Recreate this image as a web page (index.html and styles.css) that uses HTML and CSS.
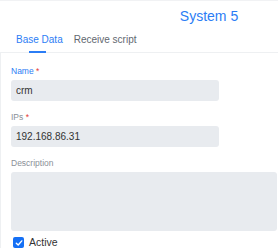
FILE: index.html
```html
<!DOCTYPE html>
<html lang="en">
<head>
    <meta charset="UTF-8">
    <meta name="viewport" content="width=device-width, initial-scale=1.0">
    <title>System 5</title>
    <link rel="stylesheet" href="styles.css">
</head>
<body>
    <div class="dialog">
        <div class="header">
            <h1>System 5</h1>
        </div>

        <div class="tabs">
            <div class="tab active">Base Data</div>
            <div class="tab">Receive script</div>
        </div>

        <form class="content">
            <label class="focused" for="name">Name <span class="req">*</span></label>
            <input type="text" id="name" value="crm">

            <label for="ips">IPs <span class="req">*</span></label>
            <input type="text" id="ips" value="192.168.86.31">

            <label for="description">Description</label>
            <textarea id="description"></textarea>

            <div class="check">
                <span class="box">
                    <svg width="8" height="8" viewBox="0 0 8 8"><path d="M1.3 4.2 L3.2 6 L6.8 1.9" fill="none" stroke="white" stroke-width="1.4" stroke-linecap="round" stroke-linejoin="round"/></svg>
                </span>
                Active
            </div>
        </form>
    </div>
</body>
</html>
```

FILE: styles.css
```css
body {
    font-family: 'Liberation Sans', Arial, sans-serif;
    background-color: white;
    margin: 0;
    padding: 0;
    overflow: hidden;
}
.dialog {
    width: 418px;
    border-top: 1px solid #f1f2f4;
}
.header {
    display: flex;
    justify-content: center;
    padding-top: 7px;
    height: 17px;
}
.header h1 {
    margin: 0;
    font-size: 14px;
    line-height: 16px;
    font-weight: normal;
    color: #2b7df5;
}
.tabs {
    display: flex;
    gap: 11px;
    padding: 9px 0 0 16px;
    border-bottom: 1px solid #eef0f2;
}
.tab {
    font-size: 10px;
    line-height: 12px;
    color: #62686f;
    height: 18px;
}
.tab.active {
    color: #2b7df5;
    position: relative;
}
.tab.active::after {
    content: "";
    position: absolute;
    left: 13px;
    width: 17px;
    bottom: -1px;
    height: 2px;
    background: #2b7df5;
}
.content {
    display: flex;
    flex-direction: column;
    align-items: flex-start;
    padding: 13px 0 0 10px;
    border-left: 1px solid #eef0f2;
}
label {
    font-size: 8.5px;
    line-height: 10px;
    color: #8a9097;
    margin-bottom: 4px;
}
label.focused {
    color: #2b7df5;
}
.req {
    color: #e53935;
}
input, textarea {
    border: none;
    border-radius: 3px;
    background: #e8ebef;
    font-family: inherit;
    font-size: 10px;
    color: #333;
    outline: none;
}
input {
    width: 198px;
    height: 21px;
    padding: 0 5px;
    margin-bottom: 11px;
}
textarea {
    width: 266px;
    height: 59px;
    padding: 0;
    resize: none;
    margin-bottom: 6px;
}
.check {
    display: flex;
    align-items: center;
    gap: 5px;
    font-size: 10.5px;
    line-height: 11px;
    color: #333;
    margin-left: 2px;
}
.box {
    width: 11px;
    height: 11px;
    border-radius: 2px;
    background: #1570f5;
    display: flex;
    align-items: center;
    justify-content: center;
}
```
